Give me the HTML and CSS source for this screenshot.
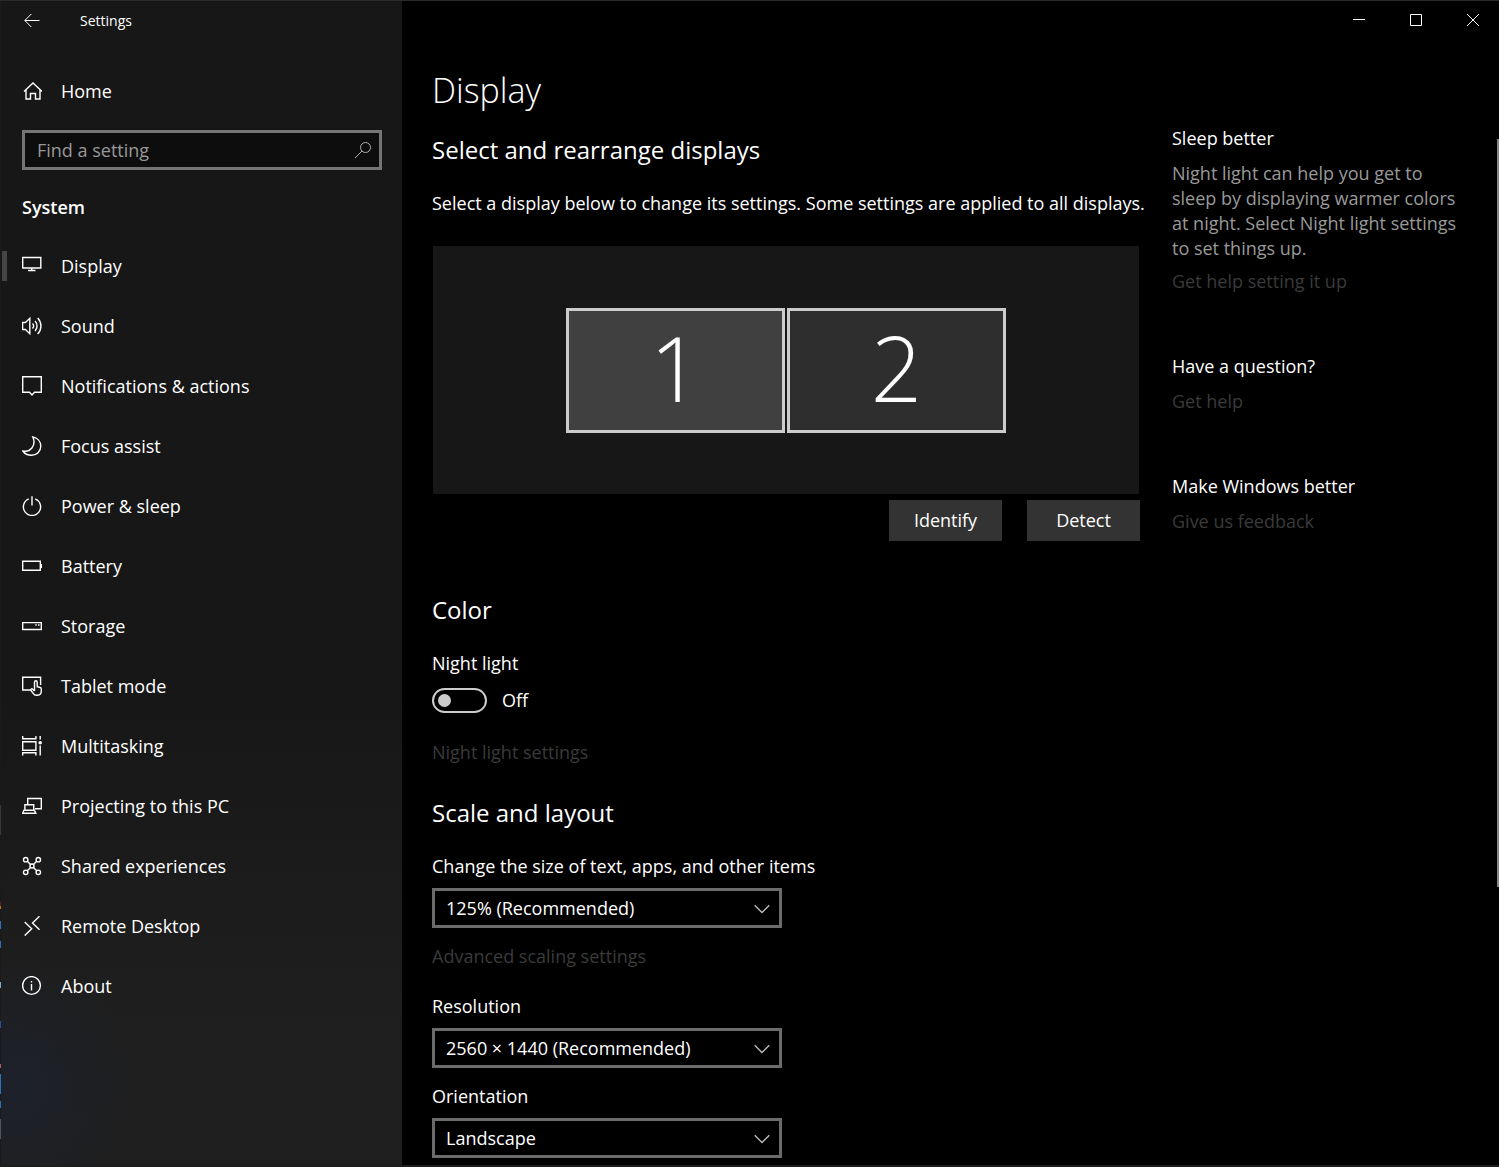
FILE: index.html
```html
<!DOCTYPE html>
<html lang="en">
  <head>
    <meta charset="UTF-8" />
    <meta name="viewport" content="width=device-width, initial-scale=1.0" />
    <title>Settings</title>
    <link rel="stylesheet" href="styles.css">
  </head>
  <body>
    <div class="window">
      <div class="sidebar">
        <div class="title-bar">
          <button class="back-button" type="button" aria-label="Back">
            <svg width="16" height="16" viewBox="0 0 16 16"><path d="M15.5 7.500H1M7.300 1L.8 7.500l6.500 6.500" /></svg>
          </button>
          <span class="window-title">Settings</span>
        </div>

        <a class="nav-item home" href="#">
          <svg class="icon" width="20" height="20" viewBox="0 0 20 20"><path d="M2 10.5L11 2l9 8.500M4 9v9h4.500v-5.500h5V18H18V9" /></svg>
          Home
        </a>

        <div class="search">
          <input class="search-input" type="text" placeholder="Find a setting" aria-label="Find a setting" />
          <svg class="search-icon" width="18" height="18" viewBox="0 0 18 18"><circle cx="11.500" cy="6.500" r="5" /><path d="M8 10L1 17" /></svg>
        </div>

        <h2 class="group-title">System</h2>

        <nav class="nav">
          <a class="nav-item active" href="#">
            <svg class="icon" width="20" height="20" viewBox="0 0 20 20"><path d="M.7 1.500h18.100v10.500H.7zM9.700 12v2.500M6 14.500h7.500" /></svg>
            Display
          </a>
          <a class="nav-item" href="#">
            <svg class="icon" width="20" height="20" viewBox="0 0 20 20"><path d="M.6 6.500h2.800L7.800 2.300v15.400L3.400 13.500H.6zM10.500 7.500c1.300 1.400 1.300 3.600 0 5M13 5c2.700 2.800 2.700 7.200 0 10M15.700 2c4.300 4.500 4.300 11.500 0 16" /></svg>
            Sound
          </a>
          <a class="nav-item" href="#">
            <svg class="icon" width="20" height="20" viewBox="0 0 20 20"><path d="M.7.7h18.600v15.600H12.500L10 18.900l-2.500-2.600H.7z" /></svg>
            Notifications &amp; actions
          </a>
          <a class="nav-item" href="#">
            <svg class="icon" width="20" height="20" viewBox="0 0 20 20"><path d="M10.800.9c4.700 1 8 4.600 8 9.300a9.200 9.200 0 0 1-9.200 9.100c-3.600 0-6.800-1.500-8.800-4.300 3.600.7 7-.4 9.100-3 2.400-3 2.600-7.300.9-11.100z" /></svg>
            Focus assist
          </a>
          <a class="nav-item" href="#">
            <svg class="icon" width="20" height="20" viewBox="0 0 20 20"><path d="M6.800 2.900a8.600 8.600 0 1 0 6.400 0M10 .2v9.300" /></svg>
            Power &amp; sleep
          </a>
          <a class="nav-item" href="#">
            <svg class="icon" width="20" height="20" viewBox="0 0 20 20"><path d="M.7 5.300h17.600v9H.7zM19.300 8v4" /></svg>
            Battery
          </a>
          <a class="nav-item" href="#">
            <svg class="icon" width="20" height="20" viewBox="0 0 20 20"><path d="M.7 6.600h18.600v6.900H.7zM13.300 9h1.500M16 9h1.500" /></svg>
            Storage
          </a>
          <a class="nav-item" href="#">
            <svg class="icon" width="20" height="20" viewBox="0 0 20 20"><path d="M8.500 14H.7V1.300h17.900V9M12.500 15V6.300c0-2 2.700-2 2.700 0v4.400l3 .8c.8.300 1.100.8 1.100 1.600v2c0 2.400-1.400 4.100-3.700 4.100h-1.200c-1.500 0-2.400-.7-3.200-1.900L9 14.500c-.8-1.300.7-2.200 1.700-1.200l1.800 1.700" /></svg>
            Tablet mode
          </a>
          <a class="nav-item" href="#">
            <svg class="icon" width="20" height="20" viewBox="0 0 20 20"><path d="M.7 0v2.700h13.200V0M.7 5.700h13.200v8.600H.7zM.7 19.500v-2.700h13.200v2.700M18.200 0v3.500M18.200 9.500v10" /><circle class="solid" cx="18.200" cy="6.800" r="1.800" /></svg>
            Multitasking
          </a>
          <a class="nav-item" href="#">
            <svg class="icon" width="20" height="20" viewBox="0 0 20 20"><path d="M5.700 8V2.500h13.600v10.200H13M2.900 14.200V8.700h8.800v5.500M.6 17.300h13.200l-1.400-3H2z" /></svg>
            Projecting to this PC
          </a>
          <a class="nav-item" href="#">
            <svg class="icon" width="20" height="20" viewBox="0 0 20 20"><circle cx="3.700" cy="3.700" r="2.200" /><circle cx="16.300" cy="3.700" r="2.200" /><circle cx="3.700" cy="16.300" r="2.200" /><circle cx="16.300" cy="16.300" r="2.200" /><circle cx="10" cy="10" r="2" /><path d="M5.300 5.300l3.200 3.200M14.700 5.300l-3.200 3.200M5.300 14.700l3.200-3.200M14.700 14.700l-3.200-3.200" /></svg>
            Shared experiences
          </a>
          <a class="nav-item" href="#">
            <svg class="icon" width="20" height="20" viewBox="0 0 20 20"><path d="M2.700 6l7 6.800-7 6.800M17.500.3l-7 6.600 7 6.800" /></svg>
            Remote Desktop
          </a>
          <a class="nav-item" href="#">
            <svg class="icon" width="20" height="20" viewBox="0 0 20 20"><circle cx="9.500" cy="9.500" r="8.900" /><path d="M9.500 8v6.500M9.500 5v1.500" /></svg>
            About
          </a>
        </nav>
      </div>

      <div class="main">
        <div class="caption-buttons">
          <button type="button" aria-label="Minimize"><svg width="12" height="12" viewBox="0 0 12 12"><path d="M0 5.500h12" /></svg></button>
          <button type="button" aria-label="Maximize"><svg width="12" height="12" viewBox="0 0 12 12"><path d="M.5.5h11v11H.5z" /></svg></button>
          <button type="button" aria-label="Close"><svg width="12" height="12" viewBox="0 0 12 12"><path d="M0 0l12 12M12 0L0 12" /></svg></button>
        </div>

        <div class="content">
          <main class="settings">
            <h1>Display</h1>

            <section>
              <h2>Select and rearrange displays</h2>
              <p class="description">Select a display below to change its settings. Some settings are applied to all displays.</p>
              <div class="arrange">
                <button class="monitor selected" type="button">1</button>
                <button class="monitor" type="button">2</button>
              </div>
              <div class="actions">
                <button class="button" type="button">Identify</button>
                <button class="button" type="button">Detect</button>
              </div>
            </section>

            <section class="color">
              <h2>Color</h2>
              <label class="label" for="night-light">Night light</label>
              <div class="toggle-row">
                <input class="toggle" type="checkbox" id="night-light" />
                <span id="night-light-state">Off</span>
              </div>
              <a class="link" href="#">Night light settings</a>
            </section>

            <section class="scale">
              <h2>Scale and layout</h2>
              <label class="label" for="text-size">Change the size of text, apps, and other items</label>
              <div class="dropdown">
                <select id="text-size">
                  <option>100%</option>
                  <option selected>125% (Recommended)</option>
                  <option>150%</option>
                  <option>175%</option>
                </select>
                <svg class="chevron" width="16" height="10" viewBox="0 0 16 10"><path d="M.7 1.200L8 8.500l7.300-7.300" /></svg>
              </div>
              <a class="link" href="#">Advanced scaling settings</a>

              <label class="label" for="resolution">Resolution</label>
              <div class="dropdown">
                <select id="resolution">
                  <option selected>2560 × 1440 (Recommended)</option>
                  <option>1920 × 1080</option>
                </select>
                <svg class="chevron" width="16" height="10" viewBox="0 0 16 10"><path d="M.7 1.200L8 8.500l7.300-7.300" /></svg>
              </div>

              <label class="label" for="orientation">Orientation</label>
              <div class="dropdown">
                <select id="orientation">
                  <option selected>Landscape</option>
                  <option>Portrait</option>
                </select>
                <svg class="chevron" width="16" height="10" viewBox="0 0 16 10"><path d="M.7 1.200L8 8.500l7.300-7.300" /></svg>
              </div>
            </section>
          </main>

          <aside class="help">
            <section>
              <h3>Sleep better</h3>
              <p>Night light can help you get to sleep by displaying warmer colors at night. Select Night light settings to set things up.</p>
              <a class="link" href="#">Get help setting it up</a>
            </section>
            <section>
              <h3>Have a question?</h3>
              <a class="link" href="#">Get help</a>
            </section>
            <section>
              <h3>Make Windows better</h3>
              <a class="link" href="#">Give us feedback</a>
            </section>
          </aside>
        </div>
        <div class="scroll-thumb"></div>
      </div>
    </div>

    <script>
      var nightLight = document.getElementById("night-light");
      var nightLightState = document.getElementById("night-light-state");

      nightLight.addEventListener("change", function () {
        nightLightState.textContent = nightLight.checked ? "On" : "Off";
      });
    </script>
  </body>
</html>
```
FILE: styles.css
```css
* {
  box-sizing: border-box;
}

body {
  margin: 0;
  background-color: #000;
  color: #fff;
  font-family: "Open Sans", "Noto Sans", sans-serif;
  font-size: 18px;
  line-height: 25px;
}

h1,
h2,
h3,
p {
  margin: 0;
}

a {
  color: inherit;
  text-decoration: none;
}

button,
input,
select {
  font: inherit;
  color: inherit;
}

svg {
  display: block;
  flex: none;
  fill: none;
  stroke: #fff;
}

.window {
  position: relative;
  display: flex;
  min-height: 100vh;
  border-top: 1px solid #2b2b2b;
  border-bottom: 2px solid #1c1c1c;
}

/* sliver of the desktop that shows at the window's left edge */
.window::before {
  content: "";
  position: absolute;
  top: 0;
  bottom: 0;
  left: 0;
  width: 1px;
  background: linear-gradient(#1a1a1a 804px, #38393b 804px, #38393b 834px, #1a1a1a 834px, #1a1a1a 901px, #5a2018 901px, #5a2018 905px, #c07020 905px, #c07020 908px, #1a1a1a 908px, #1a1a1a 920px, #2a72c0 920px, #2a72c0 928px, #1a1a1a 928px, #1a1a1a 940px, #2a72c0 940px, #2a72c0 947px, #1a1a1a 947px, #1a1a1a 981px, #7ab0c8 981px, #7ab0c8 987px, #1a1a1a 987px, #1a1a1a 1020px, #2a50a0 1020px, #2a50a0 1027px, #1a1a1a 1027px, #1a1a1a 1063px, #b06060 1063px, #b06060 1067px, #1a1a1a 1067px, #1a1a1a 1073px, #2a72c0 1073px, #2a72c0 1093px, #1a1a1a 1093px, #1a1a1a 1100px, #2a72c0 1100px, #2a72c0 1107px, #1a1a1a 1107px, #1a1a1a 1118px, #555 1118px, #555 1138px, #1a1a1a 1138px);
}

/* sidebar */
.sidebar {
  flex: none;
  width: 402px;
  background: radial-gradient(circle at 10px 1085px, #1d212a, rgba(29, 33, 42, 0) 130px), linear-gradient(#171717 60%, #1e1e1e 85%, #1f1f1f);
}

.title-bar {
  display: flex;
  align-items: center;
  gap: 40px;
  height: 39px;
  padding-left: 24px;
}

.back-button {
  padding: 0;
  background: none;
  border: none;
}

.window-title {
  font-size: 14px;
}

.icon {
  stroke-width: 1.4;
}

.icon .solid {
  fill: #fff;
  stroke: none;
}

.nav-item {
  display: flex;
  align-items: center;
  gap: 19px;
  height: 60px;
  padding-left: 22px;
}

.nav-item:hover {
  background-color: #2a2a2a;
}

.home {
  height: 50px;
  margin: 26px 0 14px;
}

.active {
  position: relative;
}

.active::before {
  content: "";
  position: absolute;
  left: 2px;
  width: 5px;
  height: 30px;
  background-color: #454545;
}

.search {
  position: relative;
  margin: 0 20px 0 22px;
}

.search-input {
  display: block;
  width: 100%;
  height: 40px;
  padding: 0 40px 0 12px;
  background-color: #0d0d0d;
  border: 3px solid #757575;
  border-radius: 0;
}

.search-input::placeholder {
  color: #999;
  opacity: 1;
}

.search-icon {
  position: absolute;
  top: 11px;
  right: 10px;
  stroke: #b0b0b0;
}

.group-title {
  margin: 25px 0 16px 22px;
  font-size: 18px;
  font-weight: 600;
}

/* main area */
.main {
  position: relative;
  flex: 1;
  min-width: 0;
}

.caption-buttons {
  display: flex;
  align-items: center;
  justify-content: flex-end;
  gap: 45px;
  height: 37px;
  padding-right: 20px;
}

.caption-buttons button {
  padding: 0;
  background: none;
  border: none;
}

.content {
  display: flex;
  gap: 32px;
  padding: 28px 20px 7px 30px;
}

.settings {
  flex: 0 1 708px;
  min-width: 0;
}

h1 {
  margin-bottom: 18px;
  font-size: 34px;
  font-weight: 350;
  line-height: 48px;
}

.settings h2 {
  margin-bottom: 24px;
  font-size: 24px;
  font-weight: 400;
  line-height: 35px;
}

.description {
  margin-bottom: 30px;
  white-space: nowrap;
}

.arrange {
  display: flex;
  align-items: center;
  justify-content: center;
  gap: 2px;
  height: 248px;
  margin: 0 1px 6px;
  background-color: #171717;
}

.monitor {
  width: 219px;
  height: 125px;
  padding: 0 0 6px;
  background-color: #2e2e2e;
  border: 3px solid #ccc;
  font-size: 90px;
  font-weight: 300;
  line-height: 100px;
}

.monitor.selected {
  background-color: #404040;
}

.actions {
  display: flex;
  justify-content: flex-end;
  gap: 25px;
}

.button {
  width: 113px;
  height: 41px;
  padding: 0;
  background-color: #333;
  border: none;
}

.button:hover {
  background-color: #444;
}

.color {
  margin-top: 51px;
}

.scale {
  margin-top: 30px;
}

.label,
.link {
  display: block;
}

.link {
  color: #3a3a3a;
}

.link:hover {
  color: #666;
}

.toggle-row {
  display: flex;
  align-items: center;
  gap: 15px;
  margin: 12px 0 27px;
}

.toggle {
  appearance: none;
  display: flex;
  align-items: center;
  width: 55px;
  height: 25px;
  margin: 0;
  padding: 0 4px;
  border: 2px solid #ccc;
  border-radius: 13px;
}

.toggle::before {
  content: "";
  width: 13px;
  height: 13px;
  border-radius: 50%;
  background-color: #ccc;
}

.toggle:checked {
  justify-content: flex-end;
}

.dropdown {
  position: relative;
  width: 350px;
  margin: 9px 0 16px;
}

.dropdown select {
  appearance: none;
  display: block;
  width: 100%;
  height: 40px;
  padding: 0 40px 0 11px;
  background-color: #000;
  border: 3px solid #6b6b6b;
  border-radius: 0;
}

.dropdown:last-child {
  margin-bottom: 0;
}

.chevron {
  position: absolute;
  top: 16px;
  right: 12px;
  stroke: #bbb;
  stroke-width: 1.4;
  pointer-events: none;
}

.scale .link {
  margin-bottom: 25px;
}

/* help column */
.help {
  flex: 0 1 295px;
  padding-top: 60px;
}

.help section {
  margin-bottom: 60px;
}

.help h3 {
  margin-bottom: 10px;
  font-size: 18px;
  font-weight: 400;
}

.help p {
  margin-bottom: 8px;
  color: #999;
}

.scroll-thumb {
  position: absolute;
  top: 138px;
  right: 0;
  width: 2px;
  height: 748px;
  background-color: #858585;
}
```
